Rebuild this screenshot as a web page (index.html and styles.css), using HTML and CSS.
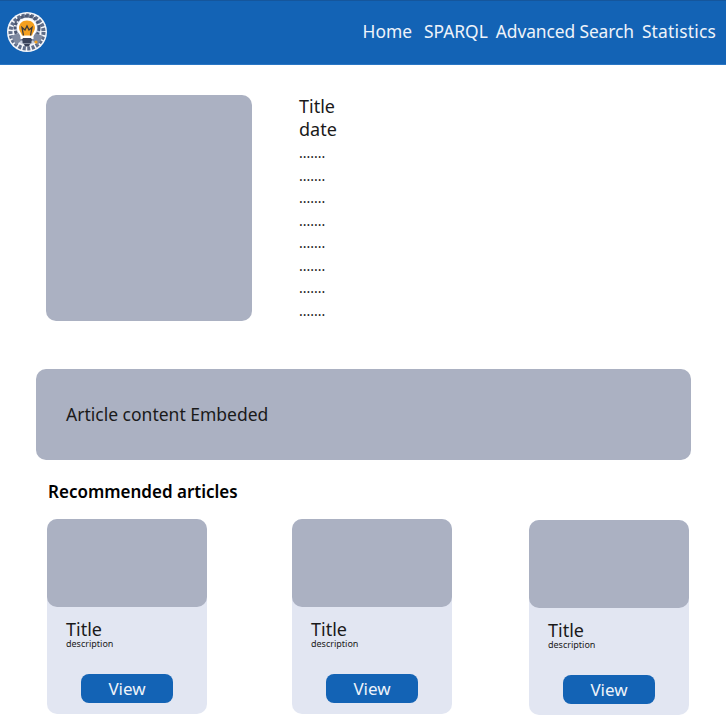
FILE: index.html
```html
<!DOCTYPE html>
<html lang="en">

<head>
  <meta charset="UTF-8">
  <meta name="viewport" content="width=device-width, initial-scale=1.0">
  <title>Article</title>
  <link rel="stylesheet" href="styles.css">
</head>

<body>
  <header class="navbar">
    <svg class="logo" viewBox="0 0 40 40" width="40" height="40">
      <circle cx="20" cy="20" r="20" fill="#f4f6fa" />
      <circle cx="20" cy="20" r="16.500" fill="none" stroke="#5f6d89" stroke-width="4" stroke-dasharray="3 1.500" />
      <circle cx="20" cy="20" r="13" fill="#c9d0de" />
      <circle cx="20" cy="16" r="12" fill="none" stroke="#4c5873" stroke-width="3" stroke-dasharray="3 1.500" />
      <path d="M4 24l8-3 3 7-6 5zM36 24l-8-3-3 7 6 5z" fill="#7f8aa1" />
      <path d="M20 6.500c-6.500 0-10 4.500-10 9.500 0 3.500 2.500 5.500 3.500 8v3h13v-3c1-2.500 3.500-4.500 3.500-8 0-5-3.500-9.500-10-9.500z" fill="#fff" />
      <path d="M20 8.500c-5 0-8 3.500-8 7.500 0 3 2.500 5 3 7.500h10c.5-2.500 3-4.500 3-7.500 0-4-3-7.500-8-7.500z" fill="#f5a01f" />
      <path d="M16.500 23.500l-1.500-8 3 2.500 2-4 2 4 3-2.500-1.500 8" fill="none" stroke="#3c3a3a" stroke-width="1.300" />
      <rect x="15.500" y="26" width="9" height="5.500" rx="1" fill="#39425a" />
      <path d="M17 32h6l-1 2.500h-4z" fill="#39425a" />
      <circle cx="29" cy="30" r="1.600" fill="#f5a01f" />
    </svg>
    <nav class="nav-links">
      <a href="#">Home</a>
      <a href="#">SPARQL</a>
      <a href="#">Advanced Search</a>
      <a href="#">Statistics</a>
    </nav>
  </header>

  <section class="article-top">
    <div class="cover"></div>
    <div class="meta">
      <div>Title</div>
      <div class="date">date</div>
      <div class="dots">.......</div>
      <div class="dots">.......</div>
      <div class="dots">.......</div>
      <div class="dots">.......</div>
      <div class="dots">.......</div>
      <div class="dots">.......</div>
      <div class="dots">.......</div>
      <div class="dots">.......</div>
    </div>
  </section>

  <section class="embed">Article content Embeded</section>

  <h2 class="rec-heading">Recommended articles</h2>

  <section class="cards">
    <div class="card">
      <div class="card-img"></div>
      <div class="card-title">Title</div>
      <div class="card-desc">description</div>
      <a class="view-btn" href="#">View</a>
    </div>
    <div class="card">
      <div class="card-img"></div>
      <div class="card-title">Title</div>
      <div class="card-desc">description</div>
      <a class="view-btn" href="#">View</a>
    </div>
    <div class="card card-low">
      <div class="card-img"></div>
      <div class="card-title">Title</div>
      <div class="card-desc">description</div>
      <a class="view-btn" href="#">View</a>
    </div>
  </section>
</body>

</html>
```

FILE: styles.css
```css
* {
  margin: 0;
  padding: 0;
  box-sizing: border-box;
}

body {
  font-family: "Noto Sans", "Open Sans", sans-serif;
  color: #1a1a1a;
  background: #fff;
}

a {
  text-decoration: none;
  color: inherit;
}

.navbar {
  height: 65px;
  display: flex;
  align-items: center;
  justify-content: space-between;
  padding: 0 10px 1px 7px;
  background: #1363b5;
  border-top: 1px solid #15569c;
  border-bottom: 1px solid #2a76c4;
}

.logo {
  display: block;
}

.nav-links {
  display: flex;
  align-items: center;
  color: #eef3fa;
  font-size: 17.4px;
  line-height: 22px;
  margin-bottom: 2px;
}

.nav-links a:nth-child(1) {
  margin-right: 12px;
}

.nav-links a:nth-child(2) {
  margin-right: 8px;
}

.nav-links a:nth-child(3) {
  margin-right: 8px;
  letter-spacing: -0.1px;
}

.nav-links a:nth-child(4) {
  letter-spacing: 0.2px;
}

.article-top {
  display: flex;
  height: 256px;
  padding: 30px 0 0 46px;
}

.cover {
  width: 206px;
  height: 226px;
  background: #abb1c2;
  border-radius: 10px;
}

.meta {
  margin-left: 47px;
  font-size: 18px;
  line-height: 22.7px;
}

.date {
  margin-bottom: 2px;
}

.dots {
  font-size: 14px;
  line-height: 22.5px;
}

.embed {
  height: 91px;
  margin: 48px 35px 0 36px;
  padding: 0 31px 2px 30px;
  display: flex;
  align-items: center;
  font-size: 17.5px;
  background: #abb1c2;
  border-radius: 10px;
}

.rec-heading {
  margin: 20px 0 0 48px;
  font-size: 17px;
  line-height: 24px;
  font-weight: 600;
  color: #000;
}

.cards {
  display: flex;
  margin: 15px 0 0 47px;
}

.card {
  width: 160px;
  height: 195px;
  margin-right: 85px;
  background: #e2e6f2;
  border-radius: 10px;
}

.card:nth-child(2) {
  margin-right: 77px;
}

.card-low {
  margin: 1px 0 0 0;
}

.card-img {
  height: 88px;
  background: #abb1c2;
  border-radius: 10px;
}

.card-title {
  margin: 11px 0 0 19px;
  font-size: 18px;
  line-height: 22px;
}

.card-desc {
  margin: -1px 0 0 19px;
  font-size: 9px;
  line-height: 10px;
}

.view-btn {
  display: block;
  width: 92px;
  height: 29px;
  margin: 25px auto 0;
  text-align: center;
  font-size: 17px;
  line-height: 29px;
  color: #eef3fa;
  background: #1363b5;
  border-radius: 8px;
}
```
